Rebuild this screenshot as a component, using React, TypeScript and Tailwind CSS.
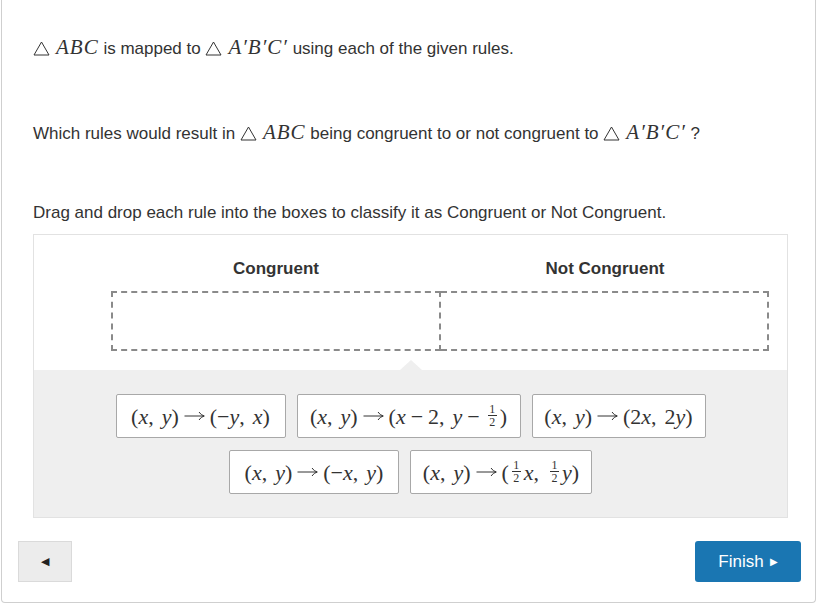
import React from "react";

const serif = { fontFamily: '"Liberation Serif", "DejaVu Serif", serif' };

function V({ children }: { children: React.ReactNode }) {
  return <span className="italic">{children}</span>;
}

function Half() {
  return (
    <span className="inline-flex flex-col items-center align-middle mx-[3px] text-[12px] leading-[12px] -translate-y-[1px]">
      <span>1</span>
      <span className="border-t border-[#333] w-[9px]" />
      <span>2</span>
    </span>
  );
}

function Arrow() {
  return (
    <svg width="21" height="10" viewBox="0 0 21 10" className="inline-block mx-[5px] align-middle">
      <path d="M0.5 5 H20" stroke="#333" strokeWidth="1" fill="none" />
      <path d="M15 1 Q17 4.2 20.3 5 Q17 5.8 15 9" stroke="#333" strokeWidth="1" fill="none" />
    </svg>
  );
}

function Minus() {
  return <span className="mx-[5px]">−</span>;
}

function Tri() {
  return (
    <svg width="17" height="15" viewBox="0 0 17 15" className="inline-block mr-[6px] -translate-y-[1px]">
      <path d="M8.5 1 L16 14 L1 14 Z" fill="none" stroke="#333" strokeWidth="1" />
    </svg>
  );
}

function ABC() {
  return (
    <span style={serif} className="italic text-[21px] tracking-[1px]">
      ABC
    </span>
  );
}

function ApBpCp() {
  return (
    <span style={serif} className="italic text-[21px] tracking-[1px]">
      A′B′C′
    </span>
  );
}

function Tile({ w, children }: { w: string; children: React.ReactNode }) {
  return (
    <div
      className={`${w} h-[44px] bg-white border border-[#a8a8a8] rounded-[2px] flex items-center justify-center text-[22px] text-[#333] whitespace-nowrap`}
      style={serif}
    >
      {children}
    </div>
  );
}

const Sp = () => <span className="inline-block w-[8px]" />;

const XY = () => (
  <>
    (<V>x</V>,<Sp />
    <V>y</V>)
  </>
);

export default function App() {
  return (
    <div className="w-[817px] h-[605px] bg-white" style={{ fontFamily: '"Liberation Sans", Arial, sans-serif' }}>
      <div className="ml-[1px] w-[815px] h-[603px] border-l border-r border-b border-[#cfcfcf] rounded-b-[4px] flex flex-col text-[#333]">
        <div className="pl-[31px] pt-[34px] text-[17px] leading-[26px]">
          <p>
            <Tri />
            <ABC /> is mapped to <Tri />
            <ApBpCp /> using each of the given rules.
          </p>
          <p className="mt-[57px]">
            Which rules would result in <Tri />
            <ABC /> being congruent to or not congruent to <Tri />
            <ApBpCp /> ?
          </p>
          <p className="mt-[53px]">Drag and drop each rule into the boxes to classify it as Congruent or Not Congruent.</p>
        </div>

        <div className="ml-[31px] mt-[8px] w-[755px] h-[284px] border border-[#e2e2e2] flex flex-col">
          <div className="h-[135px] bg-white flex flex-col">
            <div className="flex pl-[77px] pt-[23px]">
              <div className="w-[330px] text-center text-[17px] font-bold text-[#333] leading-[22px]">Congruent</div>
              <div className="w-[328px] text-center text-[17px] font-bold text-[#333] leading-[22px]">Not Congruent</div>
            </div>
            <div className="flex pl-[77px] mt-[11px]">
              <div className="w-[330px] h-[60px] border-2 border-dashed border-[#8a8a8a]" />
              <div className="w-[328px] h-[60px] border-2 border-l-0 border-dashed border-[#8a8a8a]" />
            </div>
          </div>
          <div className="relative flex-1 bg-[#efefef] flex flex-col items-center pt-[24px] gap-[12px]">
            <div className="absolute left-[366px] -top-[10px] w-0 h-0 border-l-[11px] border-r-[11px] border-b-[10px] border-l-transparent border-r-transparent border-b-[#efefef]" />
            <div className="flex gap-[11px]">
              <Tile w="w-[170px]">
                <XY />
                <Arrow />(−<V>y</V>,<Sp />
                <V>x</V>)
              </Tile>
              <Tile w="w-[224px]">
                <XY />
                <Arrow />(<V>x</V>
                <Minus />2,<Sp />
                <V>y</V>
                <Minus />
                <Half />)
              </Tile>
              <Tile w="w-[174px]">
                <XY />
                <Arrow />
                (2<V>x</V>,<Sp />
                2<V>y</V>)
              </Tile>
            </div>
            <div className="flex gap-[11px]">
              <Tile w="w-[170px]">
                <XY />
                <Arrow />(−<V>x</V>,<Sp />
                <V>y</V>)
              </Tile>
              <Tile w="w-[182px]">
                <XY />
                <Arrow />(<Half />
                <V>x</V>,<Sp />
                <Half />
                <V>y</V>)
              </Tile>
            </div>
          </div>
        </div>

        <div className="flex justify-between items-start mt-[23px] pl-[16px] pr-[14px]">
          <button className="w-[54px] h-[41px] bg-[#ececec] border border-[#dadada] flex items-center justify-center text-[#222] text-[11px]">
            ◀
          </button>
          <button className="w-[106px] h-[41px] bg-[#1a76b2] rounded-[3px] text-white text-[17px] flex items-center justify-center gap-[6px]">
            <span>Finish</span>
            <span className="text-[10px]">▶</span>
          </button>
        </div>
      </div>
    </div>
  );
}
